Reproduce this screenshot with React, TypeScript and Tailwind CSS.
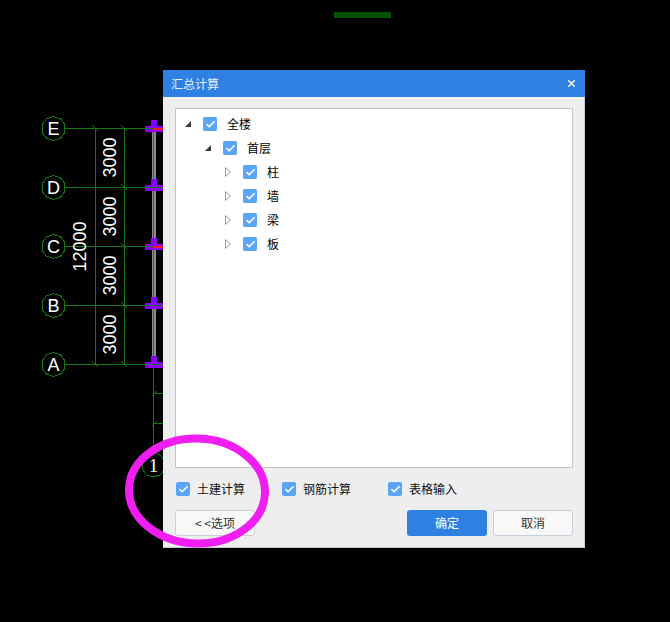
import { Check, X } from 'lucide-react'

const AXES = [
  { label: 'E', y: 128.5, red: true },
  { label: 'D', y: 187.5, red: false },
  { label: 'C', y: 246.5, red: true },
  { label: 'B', y: 305.5, red: false },
  { label: 'A', y: 364.5, red: false },
]

const SPANS = [157.5, 216.5, 275.5, 334.5]

function polygon(cx: number, cy: number, r: number) {
  const pts = []
  for (let i = 0; i < 10; i++) {
    const a = (Math.PI * 2 * i) / 10 + Math.PI / 10
    pts.push(`${(cx + r * Math.cos(a)).toFixed(1)},${(cy + r * Math.sin(a)).toFixed(1)}`)
  }
  return pts.join(' ')
}

function TickDown({ x, y }: { x: number; y: number }) {
  return <line x1={x - 3} y1={y - 3} x2={x + 3} y2={y + 3} stroke="#0f7a0f" />
}

function TickUp({ x, y }: { x: number; y: number }) {
  return <line x1={x - 2} y1={y + 3} x2={x + 3} y2={y - 2} stroke="#0f7a0f" />
}

function CadDrawing() {
  return (
    <svg
      width="670"
      height="622"
      className="absolute left-0 top-0"
      shapeRendering="crispEdges"
      style={{ fontFamily: '"Liberation Sans", sans-serif' }}
    >
      <rect x="334" y="12" width="57" height="6" fill="#035203" />

      {/* column line */}
      <rect x="152" y="128" width="4" height="236" fill="#8a8a8a" />
      <line x1="153.5" y1="128" x2="153.5" y2="364" stroke="#e01c1c" />
      <line x1="153.5" y1="364" x2="153.5" y2="453" stroke="#0f7a0f" />

      {/* dimension lines */}
      <line x1="95.5" y1="128" x2="95.5" y2="365" stroke="#0f7a0f" />
      <line x1="124.5" y1="128" x2="124.5" y2="365" stroke="#0f7a0f" />
      <line x1="153" y1="393.5" x2="164" y2="393.5" stroke="#0f7a0f" />
      <line x1="153" y1="423.5" x2="164" y2="423.5" stroke="#0f7a0f" />
      <TickUp x={154} y={393} />
      <TickUp x={154} y={423} />

      {AXES.map((a) => (
        <g key={a.label}>
          <rect x="145" y={a.y - 2.5} width="18" height="6" fill="#8a00ff" />
          <rect x="151" y={a.y - 8.5} width="6" height="6" fill="#8a00ff" />
          <line x1="65" y1={a.y} x2={a.red ? 153 : 163} y2={a.y} stroke="#0f7a0f" />
          {a.red && <rect x="153" y={a.y - 0.5} width="10" height="2" fill="#ff1a1a" />}
          <polygon points={polygon(53.5, a.y, 12)} fill="none" stroke="#0f7a0f" />
          <text x="53.5" y={a.y + 6.5} textAnchor="middle" fontSize="18" fill="#fff">
            {a.label}
          </text>
          <TickDown x={124.5} y={a.y} />
        </g>
      ))}
      <TickDown x={95.5} y={128.5} />
      <TickDown x={95.5} y={364.5} />

      {SPANS.map((y) => (
        <text key={y} transform={`translate(116 ${y}) rotate(-90)`} textAnchor="middle" fontSize="18" fill="#fff">
          3000
        </text>
      ))}
      <text transform="translate(86 246.5) rotate(-90)" textAnchor="middle" fontSize="18" fill="#fff">
        12000
      </text>

      <polygon points={polygon(153.5, 465, 12)} fill="none" stroke="#0f7a0f" />
      <text x="153.5" y="472" textAnchor="middle" fontSize="19" fill="#fff" style={{ fontFamily: '"Liberation Serif", serif' }}>
        1
      </text>
    </svg>
  )
}

function CheckBox() {
  return (
    <span className="flex h-[14px] w-[14px] shrink-0 items-center justify-center rounded-[2px] bg-[#5aa5fa]">
      <Check className="h-[11px] w-[11px] text-white" strokeWidth={3.5} />
    </span>
  )
}

function Arrow({ open }: { open: boolean }) {
  if (open) {
    return (
      <svg width="8" height="8" viewBox="0 0 8 8" className="shrink-0">
        <polygon points="7,1 7,7 1,7" fill="#3a3a3a" />
      </svg>
    )
  }
  return (
    <svg width="8" height="10" viewBox="0 0 8 10" className="shrink-0">
      <polygon points="1.5,0.5 6.5,5 1.5,9.5" fill="#fff" stroke="#9a9a9a" />
    </svg>
  )
}

function TreeRow({ label, level, open }: { label: string; level: number; open: boolean }) {
  const indent = ['pl-[8px]', 'pl-[28px]', 'pl-[48px]'][level]
  return (
    <div className={`flex h-[24px] items-center ${indent}`}>
      <span className="flex w-[19px] justify-start">
        <Arrow open={open} />
      </span>
      <CheckBox />
      <span className="ml-[10px] text-xs text-black">{label}</span>
    </div>
  )
}

function Option({ label, className }: { label: string; className: string }) {
  return (
    <div className={`flex items-center gap-[7px] ${className}`}>
      <CheckBox />
      <span className="text-xs text-[#111]">{label}</span>
    </div>
  )
}

function Dialog() {
  return (
    <div className="absolute left-[163px] top-[70px] flex h-[478px] w-[422px] flex-col">
      <div className="flex h-[27px] shrink-0 items-center justify-between bg-[#2e80e2] pl-[8px] pr-[8px]">
        <span className="text-xs text-[#e6f0fc]">汇总计算</span>
        <X className="h-[11px] w-[11px] text-white" strokeWidth={3} />
      </div>
      <div className="flex flex-1 flex-col border-b border-r border-[#c8ccd4] bg-[#eeeeee]">
        <div className="ml-[12px] mr-[11px] mt-[11px] h-[360px] border border-[#c4c4c4] bg-white pt-[3px]">
          <TreeRow label="全楼" level={0} open />
          <TreeRow label="首层" level={1} open />
          <TreeRow label="柱" level={2} open={false} />
          <TreeRow label="墙" level={2} open={false} />
          <TreeRow label="梁" level={2} open={false} />
          <TreeRow label="板" level={2} open={false} />
        </div>
        <div className="mt-[14px] flex h-[14px] items-center pl-[13px]">
          <Option label="土建计算" className="w-[106px]" />
          <Option label="钢筋计算" className="w-[106px]" />
          <Option label="表格输入" className="" />
        </div>
        <div className="mt-[14px] flex items-center justify-between pl-[12px] pr-[11px]">
          <button className="h-[26px] w-[80px] rounded-[3px] border border-[#c8d0de] bg-[#f8f8f8] text-xs text-[#333]">
            &lt; &lt;选项
          </button>
          <div className="flex gap-[6px]">
            <button className="h-[26px] w-[80px] rounded-[3px] bg-[#2e80e2] text-xs text-white">确定</button>
            <button className="h-[26px] w-[80px] rounded-[3px] border border-[#c8d0de] bg-[#f8f8f8] text-xs text-[#333]">
              取消
            </button>
          </div>
        </div>
      </div>
    </div>
  )
}

export default function App() {
  return (
    <div
      className="relative h-[622px] w-[670px] overflow-hidden bg-black"
      style={{ fontFamily: '"Noto Sans CJK SC", "Liberation Sans", sans-serif' }}
    >
      <CadDrawing />
      <Dialog />
      {/* annotation circle drawn over the screenshot */}
      <svg width="670" height="622" className="pointer-events-none absolute left-0 top-0">
        <ellipse cx="197" cy="491" rx="68" ry="52.5" fill="none" stroke="#f01ef0" strokeWidth="8" transform="rotate(2 197 491)" />
      </svg>
    </div>
  )
}
